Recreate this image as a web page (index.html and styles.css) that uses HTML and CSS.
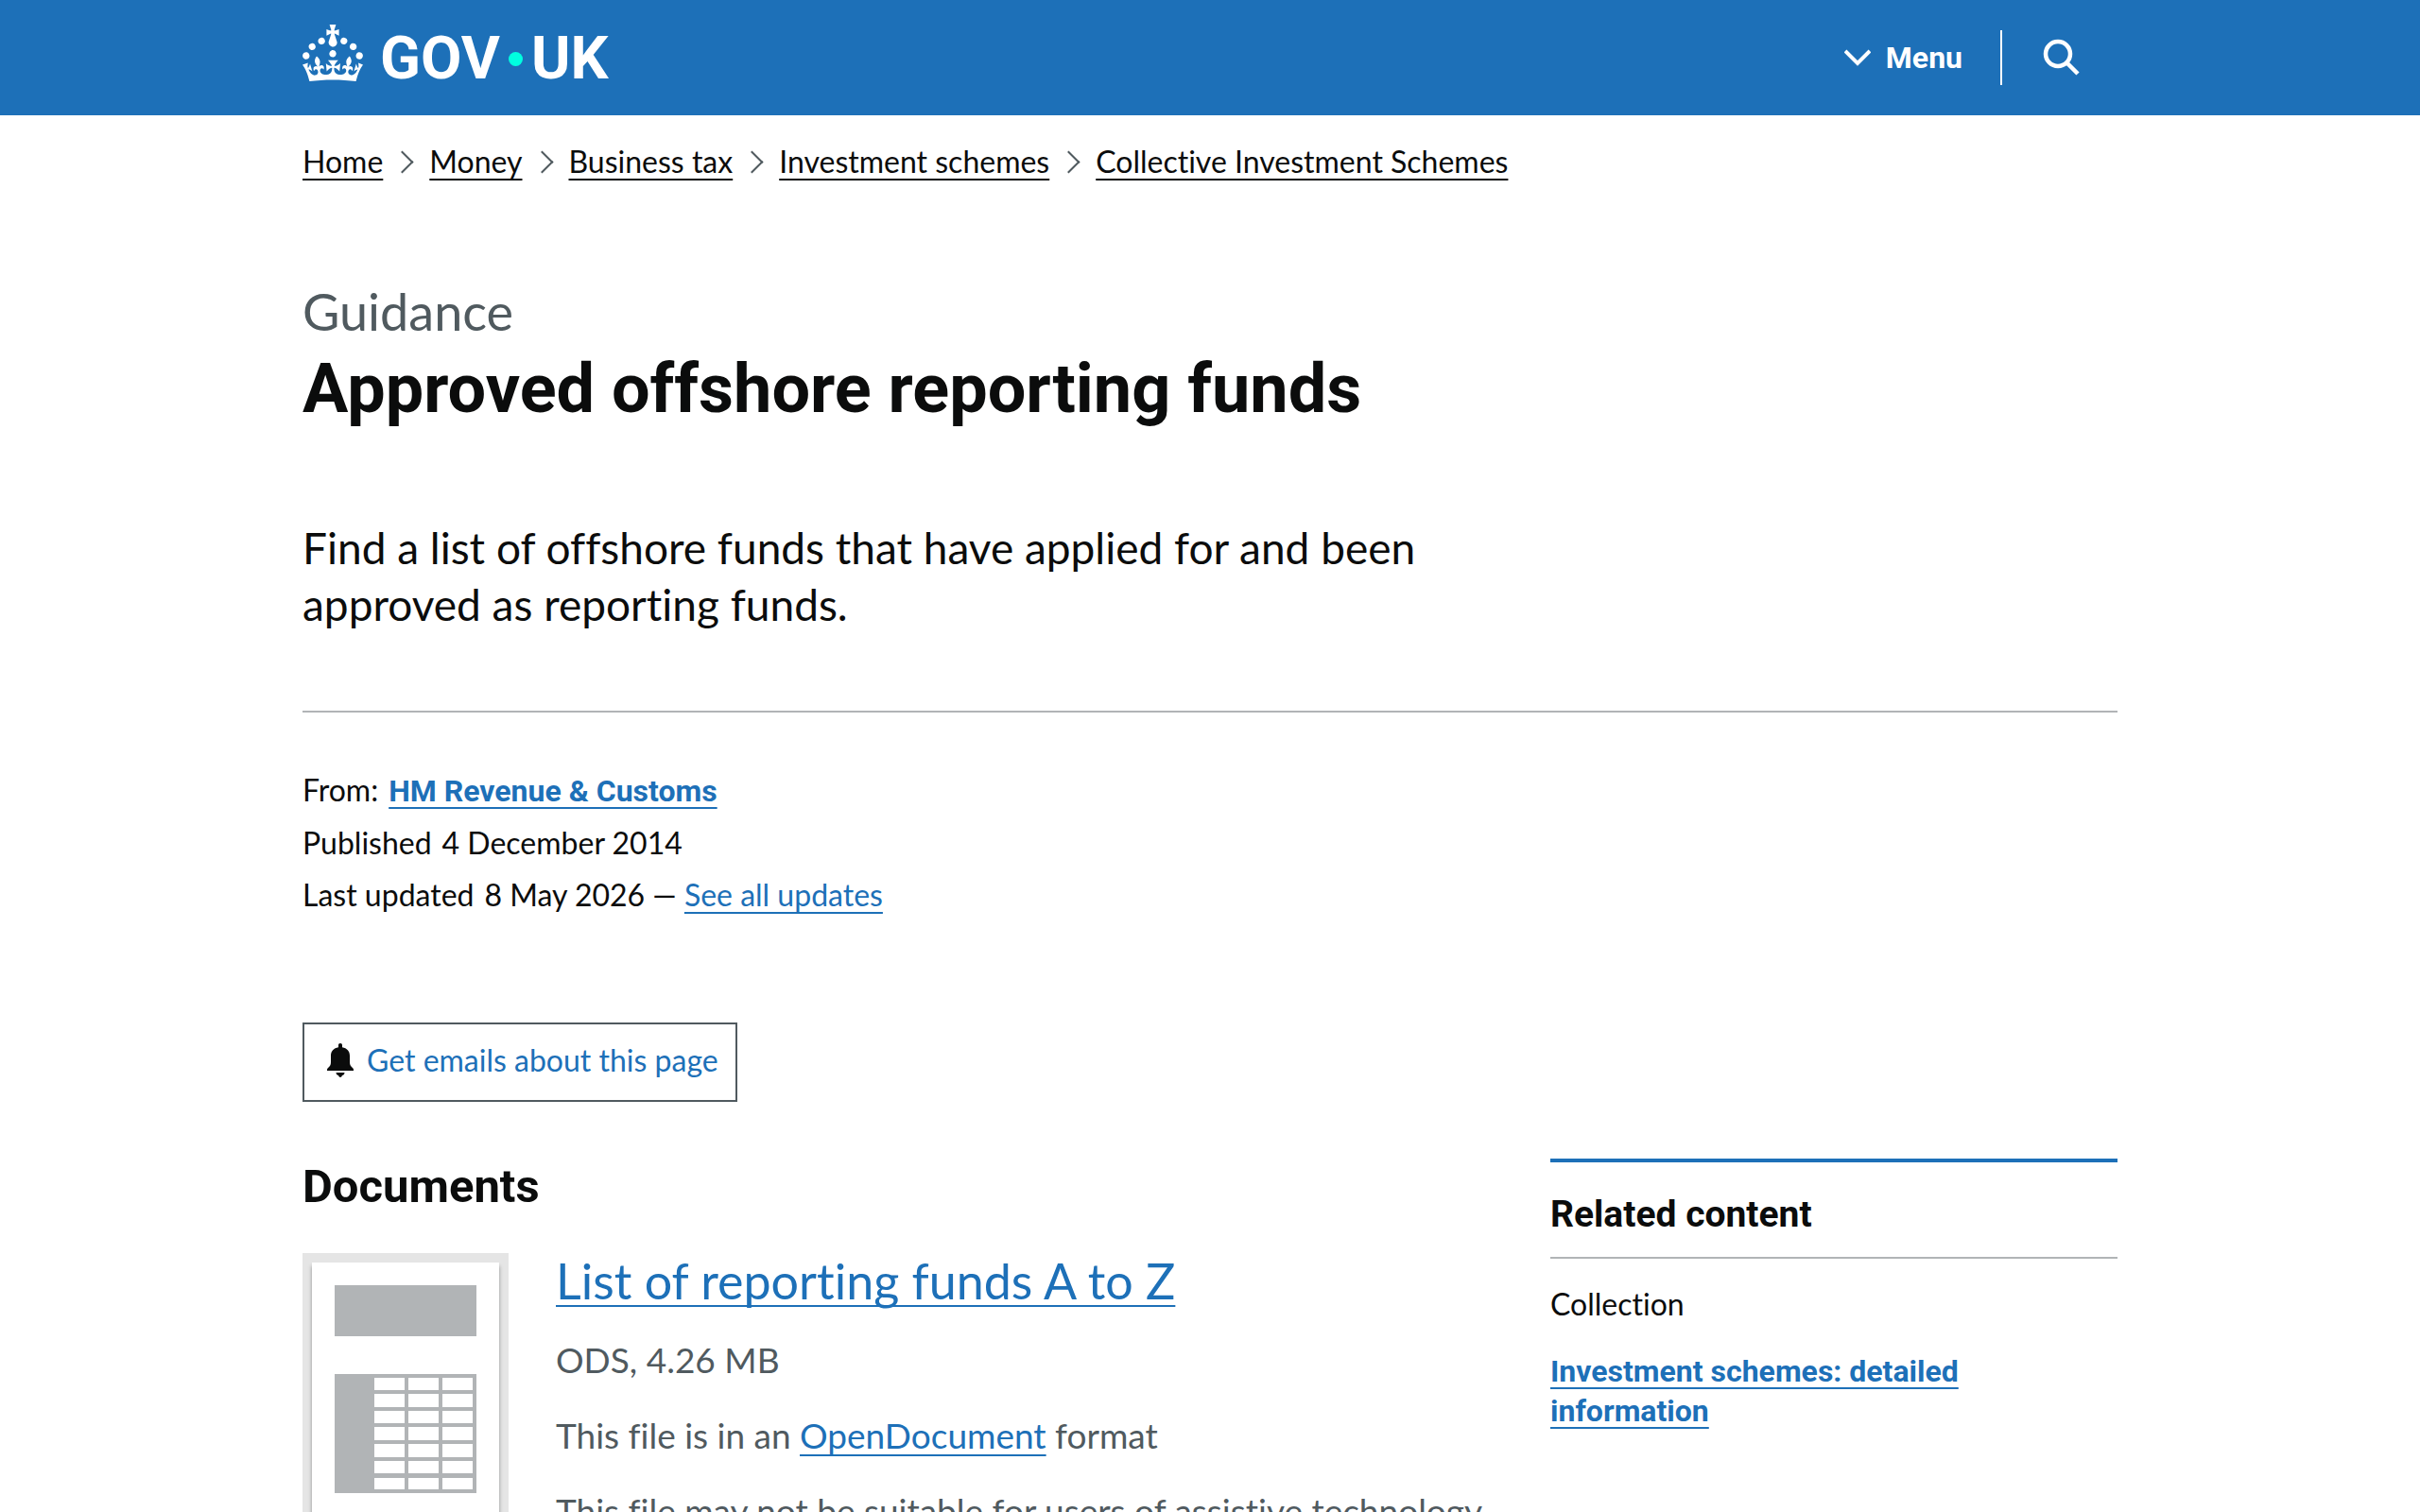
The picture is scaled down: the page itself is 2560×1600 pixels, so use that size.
FILE: index.html
```html
<!DOCTYPE html>
<html lang="en">

<head>
  <meta charset="UTF-8">
  <meta name="viewport" content="width=device-width, initial-scale=1.0">
  <title>Approved offshore reporting funds - GOV.UK</title>
  <link rel="stylesheet" href="styles.css">
</head>

<body>
  <header class="header">
    <div class="container header-inner">
      <a class="logo" href="#" aria-label="GOV.UK">
        <svg class="crown" viewBox="0 0 32 30" fill="currentColor" aria-hidden="true">
          <path d="M22.6 10.4c-1 .4-2-.1-2.4-1-.4-.9.1-2 1-2.4.9-.4 2 .1 2.4 1s-.1 2-1 2.4m-5.900 6.700c-.9.4-2-.1-2.4-1-.4-.9.1-2 1-2.400.9-.4 2 .1 2.400 1s-.1 2-1 2.400m10.800-3.700c-1 .4-2-.1-2.400-1-.4-.9.1-2 1-2.400.9-.4 2 .1 2.400 1s0 2-1 2.400m3.300 4.800c-1 .4-2-.1-2.400-1-.4-.9.1-2 1-2.400.9-.4 2 .1 2.400 1s-.1 2-1 2.400M17 4.700l2.300 1.200V2.500l-2.300.7-.2-.2.9-3h-3.400l.9 3-.2.2c-.1.1-2.300-.7-2.300-.7v3.400L15 4.700c.1.1.1.2.2.2l-1.300 4c-.1.2-.1.4-.1.6 0 1.100.8 2 1.900 2.200h.7c1-.2 1.900-1.100 1.900-2.100 0-.2 0-.4-.1-.6l-1.300-4c-.1-.2 0-.2.1-.3m-7.600 5.700c.9.4 2-.1 2.400-1 .4-.9-.1-2-1-2.400-.9-.4-2 .1-2.400 1s0 2 1 2.400m-5 3c.9.4 2-.1 2.400-1 .4-.9-.1-2-1-2.400-.9-.4-2 .1-2.400 1s.1 2 1 2.400m-3.200 4.800c.9.4 2-.1 2.400-1 .4-.9-.1-2-1-2.400-.9-.4-2 .1-2.400 1s0 2 1 2.400m14.800 11c4.400 0 8.600.3 12.300.8 1.100-4.500 2.400-7 3.700-8.800l-2.500-.9c.2 1.300.3 1.900 0 2.700-.4-.4-.8-1.100-1.100-2.300l-1.200 4c.7-.5 1.300-.8 2-.9-1.100 2.500-2.600 3.100-3.500 3-1.100-.2-1.700-1.200-1.500-2.100.3-1.200 1.500-1.500 2.100-.1 1.100-2.300-.8-3-2-2.300 1.900-1.900 2.100-3.500.6-5.600-2.100 1.600-2.100 3.200-1.200 5.500-1.200-1.400-3.200-.6-2.500 1.600.9-1.400 2.100-.5 1.900.8-.2 1.100-1.700 2.100-3.500 1.900-2.700-.2-2.900-2.100-2.900-3.600.7-.1 1.900.5 2.900 1.900l.4-4.300c-1.100 1.100-2.100 1.400-3.200 1.400.4-1.200 2.100-3 2.100-3h-5.400s1.700 1.900 2.100 3c-1.100 0-2.100-.2-3.200-1.400l.4 4.300c1-1.400 2.200-2 2.900-1.900-.1 1.500-.2 3.400-2.900 3.600-1.900.2-3.400-.8-3.500-1.900-.2-1.300 1-2.200 1.900-.8.7-2.300-1.200-3-2.500-1.600.9-2.200.9-3.900-1.200-5.500-1.500 2-1.300 3.700.6 5.600-1.200-.7-3.100 0-2 2.300.6-1.400 1.800-1.100 2.100.1.2.9-.3 1.900-1.500 2.100-.9.2-2.400-.5-3.500-3 .6 0 1.200.3 2 .9l-1.200-4c-.3 1.100-.7 1.900-1.100 2.300-.3-.8-.2-1.400 0-2.700l-2.900.9C1.300 23 2.600 25.500 3.700 30c3.700-.5 7.900-.8 12.300-.8" />
        </svg>
        <span>GOV</span>
        <span class="logo-dot"></span>
        <span>UK</span>
      </a>
      <div class="header-nav">
        <button class="menu-button" type="button">
          <svg class="chevron" viewBox="0 0 28 18" aria-hidden="true">
            <path d="M1 2l13 13L27 2" fill="none" stroke="currentColor" stroke-width="4" />
          </svg>
          Menu
        </button>
        <button class="search-button" type="button" aria-label="Search GOV.UK">
          <svg class="search-icon" viewBox="0 0 40 40" fill="none" stroke="currentColor" stroke-width="4.5" aria-hidden="true">
            <circle cx="17" cy="16" r="13" />
            <path d="M26 25l12 12" />
          </svg>
        </button>
      </div>
    </div>
  </header>

  <div class="container">
    <nav aria-label="Breadcrumb">
      <ol class="breadcrumbs">
        <li><a href="#">Home</a></li>
        <li><a href="#">Money</a></li>
        <li><a href="#">Business tax</a></li>
        <li><a href="#">Investment schemes</a></li>
        <li><a href="#">Collective Investment Schemes</a></li>
      </ol>
    </nav>

    <main>
      <div class="title">
        <p class="caption">Guidance</p>
        <h1>Approved offshore reporting funds</h1>
      </div>
      <p class="lead">Find a list of offshore funds that have applied for and been approved as reporting funds.</p>

      <dl class="metadata">
        <div>
          <dt>From:</dt>
          <dd><a class="bold" href="#">HM Revenue &amp; Customs</a></dd>
        </div>
        <div>
          <dt>Published</dt>
          <dd>4 December 2014</dd>
        </div>
        <div>
          <dt>Last updated</dt>
          <dd>8 May 2026 — <a href="#">See all updates</a></dd>
        </div>
      </dl>

      <button class="email-button" type="button">
        <svg class="bell" viewBox="0 0 28 36" fill="#0b0c0c" aria-hidden="true">
          <path d="M14 0c1.300 0 2 .9 2 2v2.200c5 .8 8 4 8 9V20c0 3 1 4.500 3 6 1 1 1 1.500 1 3H0c0-1.500 0-2 1-3 2-1.500 3-3 3-6v-6.800c0-5 3-8.200 8-9V2c0-1.100.7-2 2-2zM9.500 31h9c0 2-1.500 3-2.500 3-.5 1-1 2-2 2s-1.500-1-2-2c-1 0-2.500-1-2.500-3z" />
        </svg>
        <span>Get emails about this page</span>
      </button>

      <div class="columns">
        <section class="documents">
          <h2>Documents</h2>
          <div class="attachment">
            <a class="thumbnail" href="#" aria-label="List of reporting funds A to Z">
              <svg viewBox="0 0 198 280" fill="#b1b4b6" aria-hidden="true">
                <path d="M24 24h150v54H24z" />
                <path fill-rule="evenodd" d="M24 118h150v126H24zM66 122v13h32v-13zM102 122v13h32v-13zM138 122v13h32v-13zM66 139v14h32v-14zM102 139v14h32v-14zM138 139v14h32v-14zM66 157v13h32v-13zM102 157v13h32v-13zM138 157v13h32v-13zM66 174v14h32v-14zM102 174v14h32v-14zM138 174v14h32v-14zM66 192v14h32v-14zM102 192v14h32v-14zM138 192v14h32v-14zM66 210v13h32v-13zM102 210v13h32v-13zM138 210v13h32v-13zM66 228v12h32v-12zM102 228v12h32v-12zM138 228v12h32v-12z" />
              </svg>
            </a>
            <div class="attachment-details">
              <h3><a href="#">List of reporting funds A to Z</a></h3>
              <p>ODS, 4.26 MB</p>
              <p>This file is in an <a href="#">OpenDocument</a> format</p>
              <p>This file may not be suitable for users of assistive technology.</p>
            </div>
          </div>
        </section>

        <aside class="related">
          <h2>Related content</h2>
          <h3>Collection</h3>
          <a class="bold" href="#">Investment schemes: detailed information</a>
        </aside>
      </div>
    </main>
  </div>
</body>

</html>
```
FILE: styles.css
```css
* {
  box-sizing: border-box;
}

body {
  margin: 0;
  font-family: Lato, "Liberation Sans", Arial, sans-serif;
  font-size: 32px;
  font-variant-ligatures: none;
  line-height: 40px;
  color: #0b0c0c;
  background-color: #fff;
}

h1,
h2,
h3,
p,
dl,
dd,
ol {
  margin: 0;
  padding: 0;
}

a {
  color: #1d70b8;
  text-decoration: underline;
  text-decoration-thickness: 2px;
  text-underline-offset: 6px;
  text-decoration-skip-ink: none;
}

button {
  font: inherit;
  border: none;
  background: none;
  cursor: pointer;
}

h1,
h2,
.bold,
.logo,
.menu-button {
  font-family: Roboto, "Liberation Sans", Arial, sans-serif;
  font-weight: 700;
}

.container {
  max-width: 1980px;
  margin: 0 auto;
  padding: 0 30px;
}

/* Header */
.header {
  background-color: #1d70b8;
  color: #fff;
}

.header-inner {
  display: flex;
  align-items: center;
  justify-content: space-between;
  min-height: 122px;
}

.logo {
  display: flex;
  align-items: center;
  gap: 9px;
  padding-top: 2px;
  color: #fff;
  font-size: 63px;
  line-height: 60px;
  text-decoration: none;
}

.crown {
  width: 64px;
  height: 60px;
  margin: 0 9px 12px 0;
}

.logo-dot {
  width: 15px;
  height: 15px;
  border-radius: 50%;
  background-color: #00ffe0;
}

.header-nav {
  display: flex;
  align-items: center;
}

.menu-button,
.search-button {
  display: flex;
  align-items: center;
  height: 58px;
  padding: 0 40px;
  color: #fff;
}

.menu-button {
  gap: 16px;
  border-right: 2px solid #fff;
}

.search-button {
  padding-left: 42px;
}

.chevron {
  width: 28px;
  height: 18px;
}

.search-icon {
  width: 40px;
  height: 40px;
}

/* Breadcrumbs */
.breadcrumbs {
  display: flex;
  flex-wrap: wrap;
  padding-top: 29px;
  list-style: none;
}

.breadcrumbs li {
  display: flex;
  align-items: center;
}

.breadcrumbs li + li::before {
  content: "";
  width: 15px;
  height: 15px;
  margin: 0 20px 0 12px;
  border: solid #505a5f;
  border-width: 2px 2px 0 0;
  transform: rotate(45deg);
}

.breadcrumbs a {
  color: #0b0c0c;
}

/* Title block */
.title {
  padding: 109px 0 98px;
}

.caption {
  margin-bottom: 12px;
  font-size: 54px;
  line-height: 60px;
  color: #505a5f;
}

h1 {
  font-size: 72px;
  line-height: 80px;
}

.lead {
  max-width: 1260px;
  font-size: 46px;
  line-height: 60px;
}

.metadata {
  display: flex;
  flex-direction: column;
  gap: 15px;
  margin-top: 82px;
  padding-top: 62px;
  border-top: 2px solid #b1b4b6;
}

.metadata div {
  display: flex;
  gap: 11px;
}

.email-button {
  display: flex;
  align-items: center;
  gap: 14px;
  margin-top: 115px;
  padding: 18px 18px 22px 24px;
  color: #1d70b8;
  border: 2px solid #505a5f;
}

.bell {
  width: 28px;
  height: 36px;
}

/* Documents and sidebar */
.columns {
  display: grid;
  grid-template-columns: 21fr 10fr;
  gap: 60px;
  margin-top: 60px;
}

.documents h2 {
  margin-bottom: 40px;
  font-size: 49px;
  line-height: 60px;
}

.attachment {
  display: flex;
  gap: 50px;
}

.thumbnail {
  flex: none;
  align-self: flex-start;
  border: 10px solid #e5e5e5;
}

.thumbnail svg {
  display: block;
  width: 198px;
  height: 280px;
  box-shadow: 0 4px 4px rgba(11, 12, 12, 0.4);
}

.attachment-details {
  font-size: 37px;
  line-height: 50px;
  color: #505a5f;
}

.attachment-details h3 {
  font-size: 52px;
  font-weight: 400;
  line-height: 58px;
}

.attachment-details p {
  margin-top: 30px;
}

.related {
  border-top: 4px solid #1d70b8;
}

.related h2 {
  padding: 30px 0 20px;
  font-size: 39px;
  line-height: 50px;
  border-bottom: 2px solid #b1b4b6;
}

.related h3 {
  margin: 28px 0 30px;
  font-size: 32px;
  font-weight: 400;
  line-height: 40px;
}

.related a {
  display: inline-block;
  max-width: 480px;
  line-height: 42px;
}
```
